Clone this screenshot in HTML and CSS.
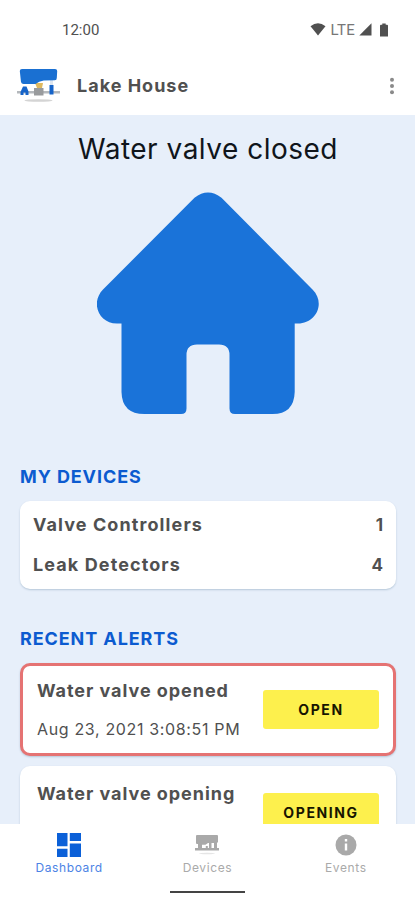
FILE: index.html
```html
<!DOCTYPE html>
<html lang="en">
<head>
    <meta charset="utf-8">
    <meta name="viewport" content="width=device-width, initial-scale=1">
    <title>Lake House</title>
    <link rel="stylesheet" href="styles.css">
</head>

<body>
    <div class="status">
        <span class="clock">12:00</span>
        <svg class="wifi" width="16" height="13" viewBox="0 0 16 13"><path d="M.5 3.2Q8-2.6 15.500 3.200L8 12.500z"/></svg>
        <span class="lte">LTE</span>
        <svg class="signal" width="13" height="13" viewBox="0 0 13 13"><path d="M12.500.3v12.200H.3z"/></svg>
        <svg class="battery" width="8" height="14" viewBox="0 0 8 14"><path d="M2.300.5h3.400v1.300H7q1 0 1 1v10.700H0V2.800q0-1 1-1h1.300z"/></svg>
    </div>

    <header class="appbar">
        <svg class="logo" width="43" height="34" viewBox="0 0 43 34">
            <ellipse cx="21.500" cy="31.500" rx="14" ry="1.300" fill="#d4d4d4"/>
            <path d="M0 22h43v2.500H0z" fill="#b4b8bc"/>
            <path d="M18 14h8l-1 5h-5z" fill="#dfb95f"/>
            <path d="M17 19h9.500v7.500H17z" fill="#999b9d"/>
            <path d="M33 10h3v9h-3z" fill="#dce5ef"/>
            <path d="M5 0h33q2.200 0 2.200 2l-.4 7q0 2.200-2 2.200l-11 .3q-5 .5-8.300 3.500H6.500q-2 0-2.500-2L2.800 2Q2.800 0 5 0z" fill="#1a70d2"/>
            <path d="M6 17.500h3.500l2 5V26H8.500v-2.500h-2V26H3.500v-3zM32.500 16h4v9.500h-4z" fill="#1664c9"/>
        </svg>
        <h1>Lake House</h1>
        <svg class="more" width="6" height="18" viewBox="0 0 6 18">
            <circle cx="3" cy="2.700" r="2"/><circle cx="3" cy="9" r="2"/><circle cx="3" cy="15.300" r="2"/>
        </svg>
    </header>

    <main>
        <h2 class="state">Water valve closed</h2>
        <svg class="house" width="222" height="222" viewBox="0 0 222 222">
            <path d="M97.500 5.800Q111-5 124.500 5.800L215.500 97.500C229 111 219 131.500 201 131.500H197.700V200Q197 222 175.500 222H138Q132.500 222 132.500 216.500V163Q132.500 152.500 122 152.500H100Q89.500 152.500 89.500 163V216.500Q89.500 222 84 222H47.500Q25 222 24.500 200V131.500H20C2 131.500-7 111 6 97.500z"/>
        </svg>

        <h3>MY DEVICES</h3>
        <div class="card devices">
            <div class="row"><span>Valve Controllers</span><span class="count">1</span></div>
            <div class="row"><span>Leak Detectors</span><span class="count">4</span></div>
        </div>

        <h3>RECENT ALERTS</h3>
        <div class="card alert current">
            <div>
                <p class="name">Water valve opened</p>
                <p class="date">Aug 23, 2021 3:08:51 PM</p>
            </div>
            <button>OPEN</button>
        </div>
        <div class="card alert">
            <p class="name">Water valve opening</p>
            <button>OPENING</button>
        </div>
    </main>

    <nav>
        <a class="tab active">
            <svg width="24" height="24" viewBox="0 0 24 24"><path d="M0 0h10.500v13.300H0zM12.800 0H24v8H12.800zM0 15.800h10.500V24H0zM12.800 10.600H24V24H12.800z"/></svg>
            <span>Dashboard</span>
        </a>
        <a class="tab">
            <svg width="26" height="24" viewBox="0 0 26 24">
                <path d="M3 2h20q1 0 1 1v6l-1 1v5h2v2.500H1V15h3v-4H3q-1 0-1-1V3q0-1 1-1z"/>
                <path d="M8 15v-3.200h3.500L14 10h1v5h-1.200v-2h-2v2zM17.500 10H20v5h-2.500z" fill="#fff"/>
                <ellipse cx="13" cy="20.500" rx="8" ry=".8" opacity=".3"/>
            </svg>
            <span>Devices</span>
        </a>
        <a class="tab">
            <svg width="24" height="24" viewBox="0 0 24 24"><circle cx="12" cy="12" r="10.500"/><path d="M10.800 6h2.400v2.500h-2.400zM10.800 10.600h2.400v7h-2.400z" fill="#fff"/></svg>
            <span>Events</span>
        </a>
        <div class="handle"></div>
    </nav>
</body>

</html>
```
FILE: styles.css
```css
* {
    box-sizing: border-box;
}
body {
    margin: 0;
    height: 900px;
    display: flex;
    flex-direction: column;
    overflow: hidden;
    background: #fff;
    color: #505050;
    font-family: Inter, Roboto, sans-serif;
}
h1, h2, h3, p {
    margin: 0;
}
.status {
    height: 59px;
    flex: none;
    display: flex;
    align-items: center;
    padding: 0 27px 0 62px;
    font-family: Roboto, sans-serif;
    font-size: 15px;
    fill: #505050;
}
.clock {
    margin-right: auto;
}
.wifi {
    margin-right: -1px;
}
.lte {
    margin: 0 4px 0 6px;
    color: #777;
    letter-spacing: 0.3px;
}
.battery {
    margin-left: 8px;
}
.appbar {
    height: 56px;
    flex: none;
    display: flex;
    align-items: center;
    padding: 0 20px 3px 17px;
}
.logo {
    margin-top: 1px;
}
.appbar h1 {
    flex: 1;
    margin-left: 17px;
    font-size: 18px;
    letter-spacing: 1px;
}
.more {
    fill: #8a8a8a;
}
main {
    flex: 1;
    min-height: 0;
    overflow: hidden;
    display: flex;
    flex-direction: column;
    padding: 16px 19px 0 20px;
    background: #e7effa;
}
.state {
    height: 36px;
    text-align: center;
    color: #10151b;
    font-size: 28px;
    font-weight: 400;
    line-height: 36px;
    letter-spacing: 0.5px;
}
.house {
    flex: none;
    align-self: center;
    margin: 25px 0 50px;
    fill: #1a73d9;
}
h3 {
    flex: none;
    height: 37px;
    color: #0c5bd0;
    font-size: 18px;
    line-height: 25px;
    letter-spacing: 0.9px;
}
.card {
    flex: none;
    border-radius: 10px;
    background: #fff;
    box-shadow: 0 1px 2px #b5c7d8;
}
.devices {
    height: 88px;
    margin-bottom: 37px;
    padding: 3px 13px;
}
.row {
    height: 40px;
    display: flex;
    align-items: center;
    justify-content: space-between;
    font-size: 18px;
    font-weight: 700;
    letter-spacing: 1.1px;
}
.count {
    padding-top: 1px;
    font-size: 17px;
    letter-spacing: 0;
}
.alert {
    height: 93px;
    display: flex;
    justify-content: space-between;
    margin-bottom: 10px;
    padding: 17px 17px 0 17px;
}
.current {
    border: 3px solid #e57373;
    padding: 14px 14px 0 14px;
}
.name {
    font-size: 18px;
    font-weight: 700;
    line-height: 22px;
    letter-spacing: 0.95px;
}
.date {
    margin-top: 17px;
    font-size: 16px;
    line-height: 20px;
    letter-spacing: 0.65px;
}
.alert button {
    width: 116px;
    height: 39px;
    margin-top: 10px;
    padding: 0;
    border: 0;
    border-radius: 3px;
    background: #fdf04d;
    color: #171500;
    font: 700 14px Inter, sans-serif;
    letter-spacing: 1.6px;
}
nav {
    position: relative;
    flex: none;
    height: 76px;
    display: flex;
    background: #fff;
}
.tab {
    flex: 1;
    display: flex;
    flex-direction: column;
    align-items: center;
    padding-top: 9px;
    color: #aaa;
    fill: #a9a9a9;
    font-size: 12px;
    line-height: 22px;
    letter-spacing: 0.6px;
}
.active {
    color: #4c83e5;
    fill: #0b60d8;
}
.handle {
    position: absolute;
    left: 170px;
    bottom: 7px;
    width: 75px;
    height: 2px;
    background: #444;
}
```
